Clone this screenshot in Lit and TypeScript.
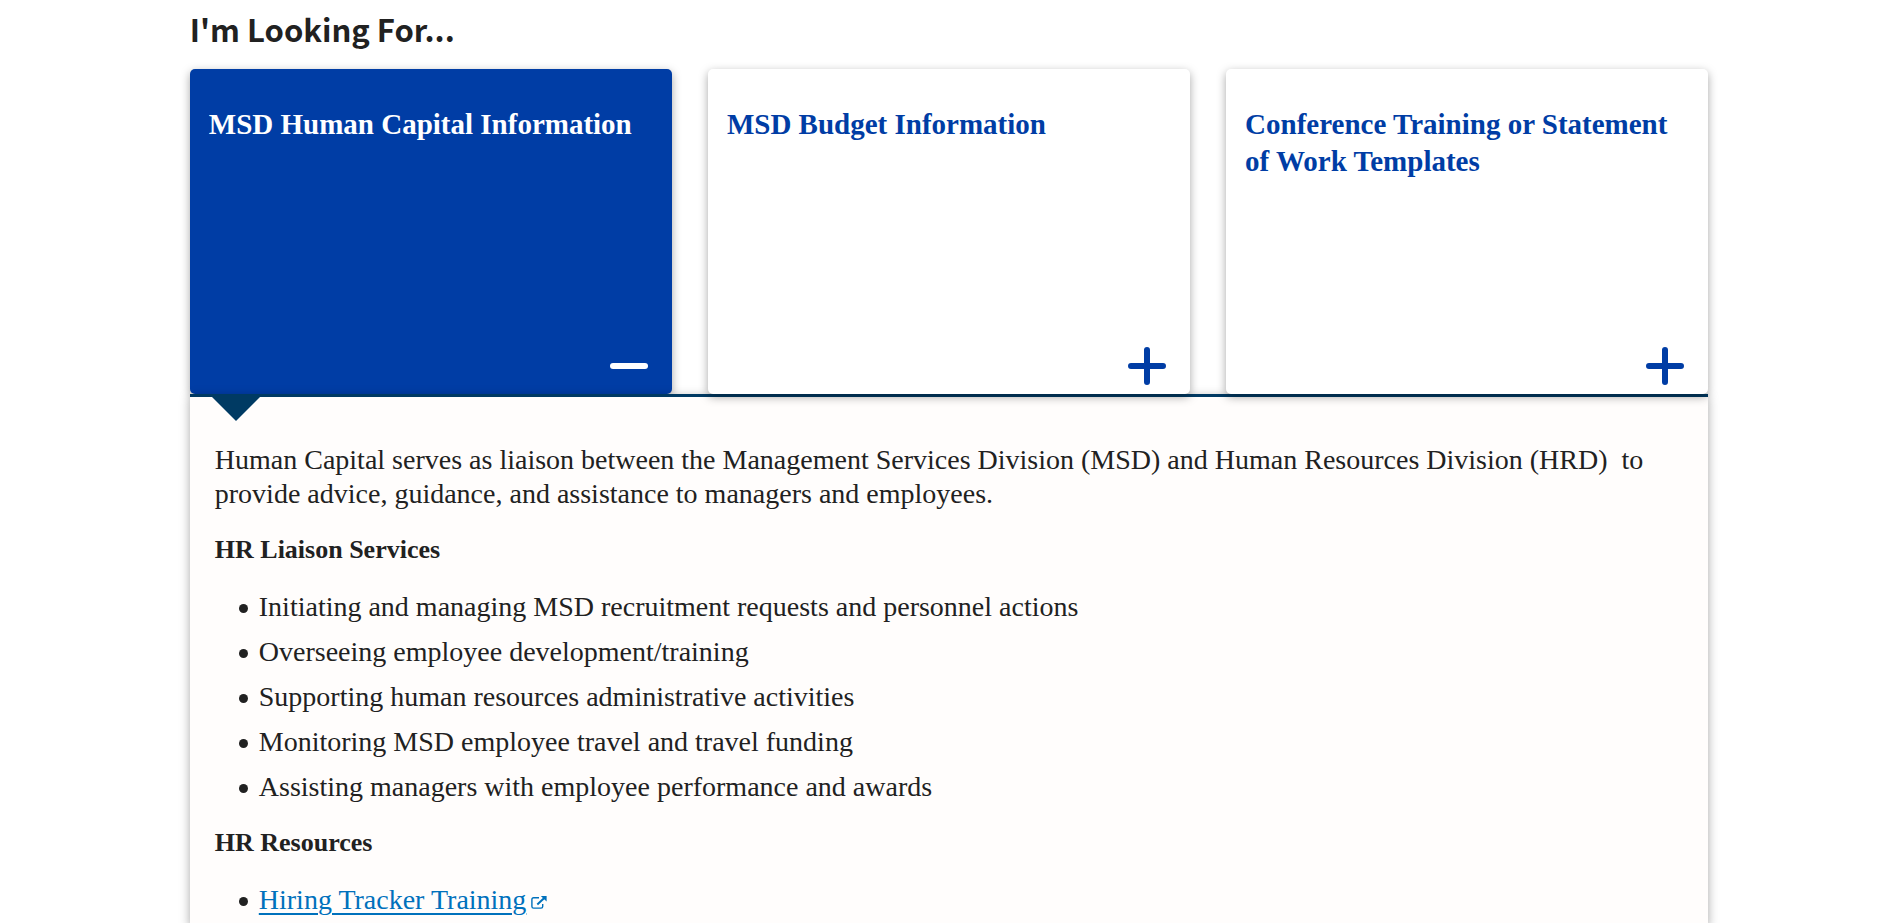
import { LitElement, html, css, nothing } from "lit";
import { customElement, state } from "lit/decorators.js";
import { classMap } from "lit/directives/class-map.js";

const CARDS = [
  "MSD Human Capital Information",
  "MSD Budget Information",
  "Conference Training or Statement of Work Templates",
];

const SERVICES = [
  "Initiating and managing MSD recruitment requests and personnel actions",
  "Overseeing employee development/training",
  "Supporting human resources administrative activities",
  "Monitoring MSD employee travel and travel funding",
  "Assisting managers with employee performance and awards",
];

@customElement("app-root")
export class AppRoot extends LitElement {
  @state() private active = 0;

  static styles = css`
    :host {
      display: flex;
      flex-direction: column;
      box-sizing: border-box;
      min-height: 100vh;
      padding: 0 10%;
      overflow: hidden;
      background: #fff;
      color: #212121;
      font-family: "Liberation Serif", serif;
      font-size: 28px;
      line-height: 34px;
    }
    .title {
      margin: 0;
      padding: 7px 0 18px;
      font-family: "Noto Sans CJK SC", "Noto Sans", sans-serif;
      font-size: 31px;
      font-weight: 700;
      line-height: 44px;
    }
    .cards {
      display: grid;
      grid-template-columns: repeat(3, 1fr);
      gap: 36px;
    }
    .card {
      position: relative;
      z-index: 2;
      display: flex;
      flex-direction: column;
      justify-content: space-between;
      min-height: 325px;
      padding: 37px 24px 9px 19px;
      border: 0;
      border-radius: 5px;
      background: #fff;
      box-shadow: 0 3px 10px rgba(0, 0, 0, 0.35);
      color: #003da5;
      font: inherit;
      font-size: 29px;
      font-weight: 700;
      line-height: 37px;
      text-align: left;
      cursor: pointer;
    }
    .card.active {
      z-index: 0;
      background: #003da5;
      color: #fff;
    }
    .sign {
      align-self: flex-end;
      width: 38px;
      height: 38px;
    }
    .panel {
      position: relative;
      z-index: 1;
      flex: 1;
      padding: 46px 24px 8px 25px;
      border-top: 3px solid #003a63;
      background: #fffdfc;
      box-shadow: 0 3px 10px rgba(0, 0, 0, 0.35);
    }
    .panel::before {
      content: "";
      position: absolute;
      top: 0;
      left: 22px;
      border: 24px solid transparent;
      border-top-color: #003a63;
      border-bottom: 0;
    }
    .text {
      margin: 0 0 22px;
      white-space: pre-wrap;
    }
    .subtitle {
      margin: 0 0 23px;
      font-size: 26px;
      font-weight: 700;
      line-height: 34px;
    }
    .list {
      display: flex;
      flex-direction: column;
      gap: 11px;
      margin: 0 0 22px;
      padding-left: 24px;
      list-style: none;
    }
    .list:last-child {
      margin-bottom: 0;
    }
    .item {
      display: flex;
      gap: 11px;
    }
    .item::before {
      content: "";
      flex: none;
      width: 9px;
      height: 9px;
      margin-top: 14px;
      border-radius: 50%;
      background: #212121;
    }
    .link {
      color: #0071bc;
      text-decoration: none;
    }
    .label {
      text-decoration: underline;
      text-decoration-thickness: 2px;
      text-underline-offset: 4px;
    }
    .external {
      width: 16px;
      height: 13px;
      margin-left: 5px;
    }
  `;

  private sign(open: boolean) {
    return html`<svg class="sign" viewBox="0 0 38 38" aria-hidden="true">
      <path
        d=${open ? "M3 19H35" : "M3 19H35M19 3V35"}
        fill="none"
        stroke="currentColor"
        stroke-width="6"
        stroke-linecap="round"
      />
    </svg>`;
  }

  private details() {
    return html`<p class="text">Human Capital serves as liaison between the Management Services Division (MSD) and Human Resources Division (HRD)  to provide advice, guidance, and assistance to managers and employees.</p>
      <h3 class="subtitle">HR Liaison Services</h3>
      <ul class="list">
        ${SERVICES.map((s) => html`<li class="item">${s}</li>`)}
      </ul>
      <h3 class="subtitle">HR Resources</h3>
      <ul class="list">
        <li class="item">
          <a class="link" href="#hiring-tracker"
            ><span class="label">Hiring Tracker Training</span
            ><svg class="external" viewBox="0 0 16 13" fill="none" stroke="currentColor" aria-hidden="true">
              <path
                d="M8 1.8H2.6Q.9 1.8 .9 3.5V10.4Q.9 12.1 2.6 12.1H10Q11.7 12.1 11.7 10.4V8"
                stroke-width="1.4"
              />
              <path d="M6.3 8.4L13 2.3" stroke-width="2" />
              <path d="M9.8 0H15.6V5.4Z" fill="currentColor" stroke="none" /></svg
          ></a>
        </li>
      </ul>`;
  }

  render() {
    return html`
      <h2 class="title">I'm Looking For...</h2>
      <div class="cards">
        ${CARDS.map(
          (name, i) => html`<button
            class=${classMap({ card: true, active: i === this.active })}
            type="button"
            aria-expanded=${i === this.active ? "true" : "false"}
            @click=${() => (this.active = i)}
          >
            <span>${name}</span>${this.sign(i === this.active)}
          </button>`
        )}
      </div>
      <section class="panel">${this.active === 0 ? this.details() : nothing}</section>
    `;
  }
}
